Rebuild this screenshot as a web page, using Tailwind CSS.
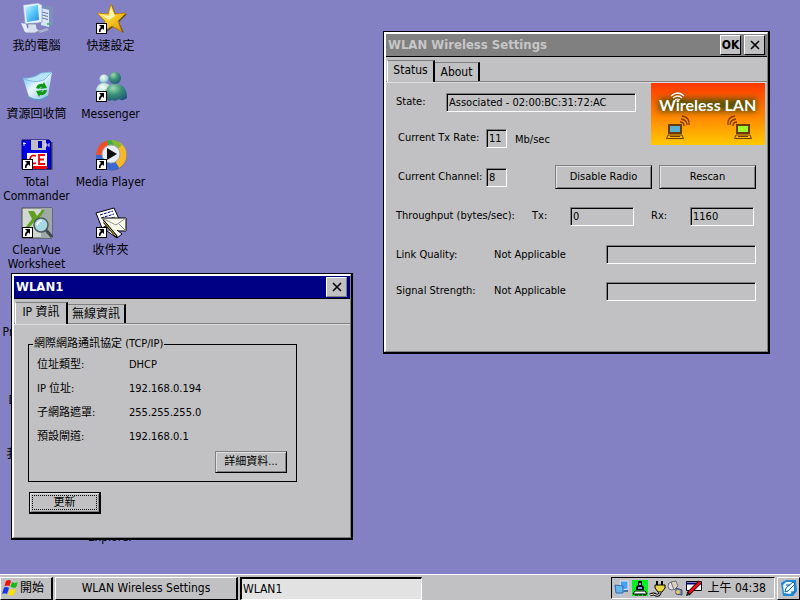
<!DOCTYPE html>
<html lang="zh-Hant">
<head>
    <meta charset="UTF-8">
    <meta name="viewport" content="width=device-width, initial-scale=1.0">
    <title>WLAN Wireless Settings</title>
    <script src="https://cdn.jsdelivr.net/npm/@tailwindcss/browser@4"></script>
</head>
<body class="h-screen flex flex-col overflow-hidden bg-[#8480c4] text-black text-[11px] leading-[14px] font-['DejaVu_Sans_Condensed','Noto_Sans_CJK_TC',sans-serif]">

    <!-- Shared shapes -->
    <svg class="absolute size-0" aria-hidden="true">
        <symbol id="shortcut" viewBox="0 0 11 11">
            <path d="M0 0h11v11H0z" fill="#000"/>
            <path d="M1 1h9v9H1z" fill="#fff"/>
            <path d="M3 2h5v5L6.500 5.500C5 6.500 4.500 7.500 4.500 9H3C2.500 7 3.500 5 5 4z" fill="#000"/>
        </symbol>
        <symbol id="close" viewBox="0 0 10 10">
            <path d="M1 1l8 8M9 1L1 9" stroke="#000" stroke-width="1.600" fill="none"/>
        </symbol>
        <symbol id="laptop" viewBox="0 0 18 15">
            <path d="M2 0h14v10H2z" fill="#6b3a08"/>
            <path d="M4 2h10v6H4z" fill="currentColor"/>
            <path d="M2 11h14l1.500 3.500h-17z" fill="none" stroke="#6b3a08"/>
            <path d="M4 12.500h10" stroke="#6b3a08"/>
        </symbol>
        <linearGradient id="screen" x1="0" y1="0" x2="1" y2="1">
            <stop offset="0" stop-color="#d8f8ff"/><stop offset=".5" stop-color="#58c8f8"/><stop offset="1" stop-color="#2888e0"/>
        </linearGradient>
        <linearGradient id="gold" x1="0" y1="0" x2="1" y2="1">
            <stop offset="0" stop-color="#fff8a0"/><stop offset=".5" stop-color="#f8cc28"/><stop offset="1" stop-color="#d89000"/>
        </linearGradient>
        <linearGradient id="bin" x1="0" y1="0" x2="1" y2="1">
            <stop offset="0" stop-color="#58b8f0"/><stop offset=".45" stop-color="#e8f8ff"/><stop offset="1" stop-color="#80b8e0"/>
        </linearGradient>
        <radialGradient id="buddy" cx=".35" cy=".25" r=".8">
            <stop offset="0" stop-color="#a0d8b0"/><stop offset=".5" stop-color="#389078"/><stop offset="1" stop-color="#205878"/>
        </radialGradient>
        <radialGradient id="buddyLight" cx=".4" cy=".3" r=".8">
            <stop offset="0" stop-color="#f4fff0"/><stop offset=".6" stop-color="#a8d8d8"/><stop offset="1" stop-color="#3880b8"/>
        </radialGradient>
    </svg>

    <main class="relative flex-1 min-h-0">
        <!-- Desktop icons -->
        <div class="grid grid-cols-[73px_75px] auto-rows-[68px] pt-[3px] text-[12px] text-center">
            <a href="#" class="flex flex-col items-center">
                <svg class="size-8 shrink-0 mb-1" viewBox="0 0 32 32">
                    <path d="M20 5l4-3 9 2v17l-5 3-8-2z" fill="#7c90c0"/>
                    <path d="M20 5l8 2v17l-8-2z" fill="#d8e4f8"/>
                    <path d="M21 9l6 1.500M21 12l6 1.500M21 15l6 1.500" stroke="#6078a8"/>
                    <circle cx="27" cy="21" r="1.200" fill="#48d048"/>
                    <path d="M2 2L17 0l4 2v17l-4 1-13 1z" fill="#e8f0ff" stroke="#8098c0" stroke-width=".7"/>
                    <path d="M4 4l13-2 1 15-12 2z" fill="url(#screen)"/>
                    <path d="M7 21h8l1 5 3 1-5 3H5l-3-4 5-1z" fill="#d8e0f0" stroke="#7888a8" stroke-width=".7"/>
                    <path d="M0 20l5 1 2 7-3 1z" fill="#e8ecf8"/>
                    <path d="M17 28l9-3 2 2-9 3z" fill="#a8b4cc"/>
                </svg>
                我的電腦
            </a>
            <a href="#" class="flex flex-col items-center">
                <svg class="size-8 shrink-0 mb-1" viewBox="0 0 32 32">
                    <path d="M17 2l4 10 11-1-8 8 5 11-11-6-9 7 2-12-8-8 11 1z" fill="#584820"/>
                    <path d="M16 1l4 10 11-1-8 8 4 11-10-6-9 6 2-11-8-8 11 1z" fill="url(#gold)" stroke="#b87800" stroke-width=".8"/>
                    <path d="M16 5l-2 8-7-1 7 5 6-4z" fill="#fff8b0"/>
                    <use href="#shortcut" x="1" y="20" width="11" height="11"/>
                </svg>
                快速設定
            </a>
            <a href="#" class="flex flex-col items-center">
                <svg class="size-8 shrink-0 mb-1" viewBox="0 0 32 32">
                    <path d="M2 7l6 19q9 6 19-1l4-24-10 1q-9 7-19 5z" fill="url(#bin)"/>
                    <path d="M2 7q10 1 18-5l11-1-8 8q-11 4-21-2z" fill="#b8e4f8" stroke="#70b0e0" stroke-width=".8"/>
                    <path d="M8 26q9 6 19-1" stroke="#5898c8" fill="none" stroke-width="1.500"/>
                    <path d="M15 17q2-5 7-4l1-2 3 6-7 1 2-2q-2 0-3 2zM26 19q-1 6-7 5l-1 2-3-6 7-1-2 2q2 0 3-2z" fill="#109818"/>
                </svg>
                資源回收筒
            </a>
            <a href="#" class="flex flex-col items-center">
                <svg class="size-8 shrink-0 mb-1" viewBox="0 0 32 32">
                    <circle cx="9" cy="8" r="4.500" fill="url(#buddyLight)"/>
                    <path d="M1 20q1-8 8-8 7 0 8 8v6H2z" fill="url(#buddyLight)"/>
                    <circle cx="20" cy="7" r="6" fill="url(#buddy)"/>
                    <path d="M11 28q-2-15 9-15 12 0 12 14-5 4-8 1-3 3-7 1-3 2-6-1z" fill="url(#buddy)"/>
                    <use href="#shortcut" x="1" y="20" width="11" height="11"/>
                </svg>
                Messenger
            </a>
            <a href="#" class="flex flex-col items-center">
                <svg class="size-8 shrink-0 mb-1" viewBox="0 0 32 32">
                    <path d="M3 3h29v28H3z" fill="#606068"/>
                    <path d="M1 1h27l2 2v27H1z" fill="#0000e8" stroke="#000070"/>
                    <path d="M10 1h15v10H10z" fill="#c0c0c0"/>
                    <path d="M17 2h4v7h-4z" fill="#0000c0"/>
                    <path d="M3 3v4M2 4.500h3M25 4v4M28 4v4M25 6h3" stroke="#fff" stroke-width=".8"/>
                    <path d="M6 14h20v16H6z" fill="#fff"/>
                    <path d="M6 27h20v3H6z" fill="#f00000"/>
                    <path d="M15 17q-5-2-6 3 1 6 6 4M24 16h-6v9h6M18 20.500h5" fill="none" stroke="#f00000" stroke-width="1.800"/>
                    <use href="#shortcut" x="1" y="20" width="11" height="11"/>
                </svg>
                Total<br>Commander
            </a>
            <a href="#" class="flex flex-col items-center">
                <svg class="size-8 shrink-0 mb-1" viewBox="0 0 32 32">
                    <circle cx="17" cy="17" r="14.500" fill="#606080"/>
                    <path d="M16 16L6 5A15 15 0 0 1 24 3z" fill="#38b048"/>
                    <path d="M16 16L1 16A15 15 0 0 1 12 1.500z" fill="#f05028"/>
                    <path d="M16 16L24 3A15 15 0 0 1 24 29z" fill="#f8b828"/>
                    <path d="M16 16L24 29A15 15 0 0 1 1 16z" fill="#3868d0"/>
                    <path d="M16 1a15 15 0 0 1 11 5l-5 5z" fill="#88b830"/>
                    <circle cx="16" cy="15" r="9" fill="#e8ecf4" stroke="#a8a8b0"/>
                    <path d="M12 9l10 6-10 6z" fill="#101010"/>
                    <use href="#shortcut" x="1" y="20" width="11" height="11"/>
                </svg>
                Media Player
            </a>
            <a href="#" class="flex flex-col items-center">
                <svg class="size-8 shrink-0 mb-1" viewBox="0 0 32 32">
                    <path d="M1 1h30v30H1z" fill="#d0d8d0" stroke="#485048"/>
                    <path d="M20 1h11v30H20z" fill="#a0a8a8"/>
                    <path d="M7 4h6l3 5 5-6h3l-6 9 4 8h-6l-3-5-5 6H4l7-9z" fill="#60a020"/>
                    <circle cx="20" cy="18" r="7" fill="#a8d8e0" stroke="#505860" stroke-width="1.500"/>
                    <path d="M16 18q1-4 5-4" stroke="#fff" stroke-width="1.500" fill="none"/>
                    <path d="M25 23l6 7" stroke="#404850" stroke-width="3"/>
                    <use href="#shortcut" x="1" y="20" width="11" height="11"/>
                </svg>
                ClearVue<br>Worksheet
            </a>
            <a href="#" class="flex flex-col items-center">
                <svg class="size-8 shrink-0 mb-1" viewBox="0 0 32 32">
                    <path d="M1 6L19 1l5 11-17 9z" fill="#fff" stroke="#000"/>
                    <path d="M5 8l13-4M6 11l13-4M8 14l12-4" stroke="#000080" stroke-dasharray="3 1"/>
                    <path d="M7 11l24 0v13l-14 0z" fill="#f8f8e8" stroke="#000"/>
                    <path d="M7 11l14 7 10-7M31 24l-7-7" fill="none" stroke="#909090"/>
                    <path d="M12 24l10 7 5-4-5-4" fill="#fff" stroke="#000"/>
                    <path d="M9 15l13 15" stroke="#000" stroke-width="2.500"/>
                    <path d="M9 15l12 14" stroke="#e8d020"/>
                    <use href="#shortcut" x="1" y="20" width="11" height="11"/>
                </svg>
                收件夾
            </a>
            <a href="#" class="row-start-5 pt-[50px]">Presentation</a>
            <a href="#" class="row-start-6 pt-[50px]">Document</a>
            <a href="#" class="row-start-7 pt-9">我的公事包</a>
            <a href="#" class="row-start-8 col-start-2 pt-[51px]">Explorer</a>
        </div>

        <!-- WLAN Wireless Settings window -->
        <section class="absolute left-[383px] top-[31px] w-[387px] border-l border-t border-r-2 border-b-2 border-black">
            <div class="border-l-2 border-t-2 border-r border-b border-l-white border-t-white border-r-[#808080] border-b-[#808080] bg-[#c1c0c2]">
                <header class="flex items-center gap-[3px] h-[23px] pl-[2px] pr-[2px] bg-[#808080] border-b border-black">
                    <h1 class="flex-1 text-[13px] font-bold text-[#c6c6c6]">WLAN Wireless Settings</h1>
                    <button class="flex items-center justify-center w-[21px] h-5 border border-t-white border-l-white border-r-black border-b-black bg-[#c1c0c2] text-[12px] font-bold">OK</button>
                    <button aria-label="Close" class="flex items-center justify-center w-[21px] h-5 border border-t-white border-l-white border-r-black border-b-black bg-[#c1c0c2]"><svg class="size-[10px]"><use href="#close"/></svg></button>
                </header>
                <nav class="flex items-end h-[25px] pl-px pt-[3px] border-b border-[#808080] text-[12px]">
                    <button class="h-[22px] w-12 -mb-px pb-1 border-t border-l border-r-2 border-t-[#808080] border-l-white border-r-black bg-[#c1c0c2]">Status</button>
                    <button class="h-[19px] w-[45px] border-t border-r-2 border-t-[#808080] border-r-black">About</button>
                </nav>
                <div class="border-t border-[#dcdcdc] pb-[45px]">
                    <div class="flex items-start justify-between pr-[2px]">
                        <div>
                            <div class="flex items-center h-[38px] pl-[10px]">
                                <label for="state" class="w-[50px]">State:</label>
                                <div class="border border-t-[#808080] border-l-[#808080] border-r-white border-b-white">
                                    <input id="state" readonly value="Associated - 02:00:BC:31:72:AC" class="block w-[188px] h-[17px] pl-px border-t border-l border-black outline-none">
                                </div>
                            </div>
                            <div class="flex items-center h-[34px] pl-3">
                                <label for="rate" class="w-[88px]">Current Tx Rate:</label>
                                <div class="border border-t-[#808080] border-l-[#808080] border-r-white border-b-white">
                                    <input id="rate" readonly value="11" class="block w-[19px] h-[17px] pl-px border-t border-l border-black outline-none">
                                </div>
                                <span class="pl-2 pt-1">Mb/sec</span>
                            </div>
                        </div>
                        <svg class="w-[114px] h-[62px]" viewBox="0 0 114 62" role="img" aria-label="Wireless LAN">
                            <defs>
                                <linearGradient id="sunset" x1="0" y1="0" x2="0" y2="1">
                                    <stop offset="0" stop-color="#ff3800"/><stop offset=".55" stop-color="#ff8800"/><stop offset="1" stop-color="#ffc800"/>
                                </linearGradient>
                                <filter id="glow" x="-20%" y="-50%" width="140%" height="200%"><feGaussianBlur stdDeviation="3"/></filter>
                            </defs>
                            <path d="M0 0h114v62H0z" fill="url(#sunset)"/>
                            <path d="M9 17h13l4-6 6 6h72v10H9z" fill="#405000" stroke="#405000" stroke-width="3" filter="url(#glow)" opacity=".85"/>
                            <text x="8" y="28" font-family="Lato, sans-serif" font-size="16" font-weight="700" fill="#fff">Wireless LAN</text>
                            <path d="M20 13q7-6 13 0M22 15q5-4 9 0M24 17q3-2 5 0" fill="none" stroke="#fff" stroke-width="1.200"/>
                            <use href="#laptop" x="15" y="41" width="18" height="15" color="#58b0d0"/>
                            <use href="#laptop" x="83" y="41" width="18" height="15" color="#a0f828"/>
                            <path d="M29 39q4 0 4 4M30 36q6 1 6 6M31 33q8 1 7 9M86 39q-4 0-4 4M85 36q-6 1-6 6M84 33q-8 1-7 9" fill="none" stroke="#803808" stroke-width="1.300"/>
                        </svg>
                    </div>
                    <div class="flex items-center h-11 pl-3">
                        <label for="channel" class="w-[88px]">Current Channel:</label>
                        <div class="border border-t-[#808080] border-l-[#808080] border-r-white border-b-white">
                            <input id="channel" readonly value="8" class="block w-[19px] h-[17px] pl-px border-t border-l border-black outline-none">
                        </div>
                        <div class="flex flex-1 justify-end gap-[7px] pr-[11px]">
                            <button class="w-[97px] h-6 border border-t-[#808080] border-l-[#808080] border-r-black border-b-black shadow-[inset_1px_1px_#e0e0e0,inset_-1px_-1px_#808080]">Disable Radio</button>
                            <button class="w-[97px] h-6 border border-t-[#808080] border-l-[#808080] border-r-black border-b-black shadow-[inset_1px_1px_#e0e0e0,inset_-1px_-1px_#808080]">Rescan</button>
                        </div>
                    </div>
                    <div class="flex items-center h-[34px] pl-[10px]">
                        <span class="w-[136px]">Throughput (bytes/sec):</span>
                        <label for="tx" class="w-[38px]">Tx:</label>
                        <div class="border border-t-[#808080] border-l-[#808080] border-r-white border-b-white">
                            <input id="tx" readonly value="0" class="block w-[62px] h-[17px] pl-px border-t border-l border-black outline-none">
                        </div>
                        <label for="rx" class="w-14 pl-[17px]">Rx:</label>
                        <div class="border border-t-[#808080] border-l-[#808080] border-r-white border-b-white">
                            <input id="rx" readonly value="1160" class="block w-[62px] h-[17px] pl-px border-t border-l border-black outline-none">
                        </div>
                    </div>
                    <div class="flex items-center h-[43px] pl-[10px]">
                        <label for="link" class="w-[98px]">Link Quality:</label>
                        <span class="w-28">Not Applicable</span>
                        <div class="border border-t-[#808080] border-l-[#808080] border-r-white border-b-white">
                            <progress id="link" value="0" max="100" class="block appearance-none w-[148px] h-[17px] border-t border-l border-black bg-transparent [&::-webkit-progress-bar]:bg-transparent"></progress>
                        </div>
                    </div>
                    <div class="flex items-center h-[30px] pl-[10px]">
                        <label for="signal" class="w-[98px]">Signal Strength:</label>
                        <span class="w-28">Not Applicable</span>
                        <div class="border border-t-[#808080] border-l-[#808080] border-r-white border-b-white">
                            <progress id="signal" value="0" max="100" class="block appearance-none w-[148px] h-[17px] border-t border-l border-black bg-transparent [&::-webkit-progress-bar]:bg-transparent"></progress>
                        </div>
                    </div>
                </div>
            </div>
        </section>

        <!-- WLAN1 window -->
        <section class="absolute left-[11px] top-[273px] w-[342px] border-l border-t border-r-2 border-b-2 border-black">
            <div class="border-l-2 border-t-2 border-r border-b border-l-white border-t-white border-r-[#808080] border-b-[#808080] bg-[#c1c0c2]">
                <header class="flex items-center h-[23px] pl-[2px] pr-[3px] bg-[#000084] border-b border-black">
                    <h1 class="flex-1 text-[13px] font-bold text-white">WLAN1</h1>
                    <button aria-label="Close" class="flex items-center justify-center w-[21px] h-5 border border-t-white border-l-white border-r-[#808080] border-b-[#808080] bg-[#c1c0c2]"><svg class="size-[10px]"><use href="#close"/></svg></button>
                </header>
                <nav class="flex items-end h-[25px] pl-px pt-[3px] border-b border-[#808080] text-[12px]">
                    <button class="h-[22px] w-[53px] -mb-px pb-1 border-t border-l border-r-2 border-t-[#808080] border-l-white border-r-black bg-[#c1c0c2]">IP 資訊</button>
                    <button class="h-[19px] w-[58px] border-t border-r-2 border-t-[#808080] border-r-black">無線資訊</button>
                </nav>
                <div class="border-t border-[#dcdcdc] pt-3 pb-[23px] pl-[14px]">
                    <fieldset class="w-[269px] border border-black pl-2 pr-[9px] pb-2">
                        <legend class="-ml-1 px-px">網際網路通訊協定 (TCP/IP)</legend>
                        <dl class="grid grid-cols-[92px_1fr] auto-rows-[24px] items-center pt-[2px]">
                            <dt>位址類型:</dt>
                            <dd>DHCP</dd>
                            <dt>IP 位址:</dt>
                            <dd>192.168.0.194</dd>
                            <dt>子網路遮罩:</dt>
                            <dd>255.255.255.0</dd>
                            <dt>預設閘道:</dt>
                            <dd>192.168.0.1</dd>
                        </dl>
                        <button class="block ml-auto mt-[2px] w-[72px] h-[22px] border border-t-[#808080] border-l-[#808080] border-r-black border-b-black shadow-[inset_1px_1px_#e0e0e0,inset_-1px_-1px_#808080]">詳細資料...</button>
                    </fieldset>
                    <button class="block mt-[10px] ml-px w-[72px] h-[22px] p-[2px] border border-r-2 border-b-2 border-black shadow-[inset_1px_1px_#e0e0e0,inset_-1px_-1px_#808080]">
                        <span class="flex items-center justify-center h-full border border-dotted border-black">更新</span>
                    </button>
                </div>
            </div>
        </section>
    </main>

    <!-- Taskbar -->
    <footer class="flex items-center gap-[2px] h-[26px] pt-px border-t border-white bg-[#c1c0c2] text-[12px]">
        <button class="flex items-center w-[53px] h-[23px] pl-px border border-r-2 border-t-white border-l-white border-r-black border-b-black">
            <svg class="size-[18px] shrink-0" viewBox="0 0 18 18">
                <path d="M4 2q3-2 5 0L7.500 7q-2-1-5 0z" fill="#f01010"/>
                <path d="M10 3q3 2 6 0L14 8.500q-3 1-5.500-1z" fill="#18b818"/>
                <path d="M2 8.500q3-1 5 .5l-2 6Q3 13.500 0 15z" fill="#1838e8"/>
                <path d="M8 9.500q3 2 6 0l-2 6q-3 2-6 0z" fill="#f8e008"/>
            </svg>
            開始
        </button>
        <button class="w-[183px] h-[23px] border border-r-2 border-t-white border-l-white border-r-black border-b-black">WLAN Wireless Settings</button>
        <button class="w-[182px] h-[23px] pl-px border border-t-2 border-l-2 border-t-black border-l-black border-r-white border-b-white bg-[#e2e2e2] text-left">WLAN1</button>
        <div class="flex items-center gap-px ml-auto h-[22px] w-[164px] pl-px pr-2 border border-t-black border-l-black border-r-white border-b-white">
            <svg class="size-[17px]" viewBox="0 0 17 17">
                <path d="M7 1l8 0v8l-7 1z" fill="#48a0e8" stroke="#d8e8ff"/>
                <path d="M11 10h4v2h-5z" fill="#4870a0"/>
                <path d="M2 5l8 1v7H3z" fill="#60b8f0" stroke="#3868b0"/>
                <path d="M3 14h7l2 2H4z" fill="#b0c8e8"/>
            </svg>
            <svg class="size-[17px]" viewBox="0 0 17 17">
                <path d="M1 0h16v16H1z" fill="#00f020"/>
                <path d="M7 1h4v4l2 2v3H5V7l2-2z" fill="#000"/>
                <path d="M8 3h2v2H8zM7 7h4v2H7z" fill="#8898e0"/>
                <path d="M4 11h10l2 3H2zM4 15h3M8 15h3M12 15h3" fill="#fff" stroke="#000"/>
            </svg>
            <svg class="size-[17px]" viewBox="0 0 17 17">
                <path d="M8 1v5M13 1v5" stroke="#000" stroke-width="2"/>
                <path d="M6 5h10v3l-3 4H9L6 8z" fill="#e8d848" stroke="#000"/>
                <path d="M11 12q0 4-4 3-2-2-6 0" fill="none" stroke="#000" stroke-width="3"/>
                <path d="M11 12q0 4-4 3-2-2-6 0" fill="none" stroke="#fff"/>
            </svg>
            <svg class="size-[17px]" viewBox="0 0 17 17">
                <circle cx="5" cy="6" r="4" fill="#e0e0e8" stroke="#707080"/>
                <path d="M4 2l5-1 2 5-4 4z" fill="#d8d0c0" stroke="#787068"/>
                <path d="M9 8l6 2v5l-6-1z" fill="#7888b0" stroke="#384868"/>
                <circle cx="11" cy="12" r="2" fill="#e8c860"/>
            </svg>
            <svg class="size-[17px]" viewBox="0 0 17 17">
                <path d="M1.500 1.500h15v9h-15z" fill="#fff" stroke="#000"/>
                <path d="M1 3.500h15" stroke="#000080" stroke-width="2"/>
                <path d="M15 2L3 14" stroke="#000" stroke-width="4"/>
                <path d="M15 2L4 13" stroke="#f00818" stroke-width="2.500"/>
                <path d="M1 16l1-3 2 2z" fill="#000"/>
            </svg>
            <time class="ml-auto whitespace-nowrap">上午 04:38</time>
        </div>
        <button aria-label="Desktop" class="flex items-center justify-center w-[23px] h-[23px] border border-t-white border-l-white border-r-black border-b-black">
            <svg class="size-[18px]" viewBox="0 0 18 18">
                <path d="M1 4l5-3h10l1 11-4 5H3z" fill="#2088d8"/>
                <path d="M3 6l3-3h8v9l-4 3-6-1z" fill="#e8f8ff"/>
                <path d="M6 9l7-6 2 2-7 7-3 1z" fill="#fff" stroke="#1060a8"/>
                <path d="M6 6h4M11 13h4" stroke="#1060a8"/>
            </svg>
        </button>
    </footer>
</body>
</html>
